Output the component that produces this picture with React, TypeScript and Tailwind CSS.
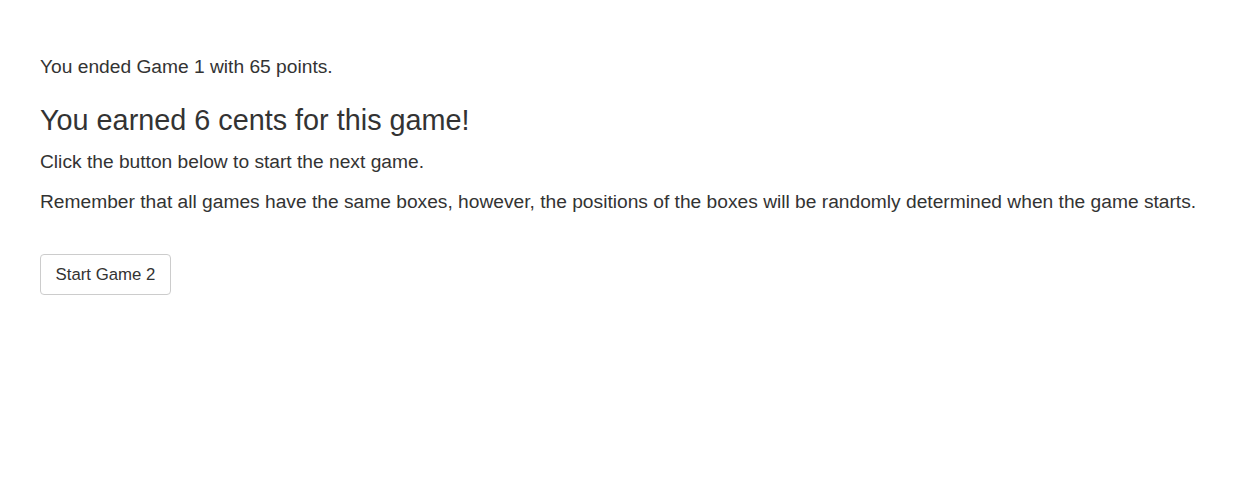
export default function App() {
  return (
    <div className="min-h-screen bg-white px-10 pt-[54px] text-[19.2px] leading-[26px] text-[#333333] font-['Liberation_Sans',Arial,sans-serif]">
      <p className="mb-[25px]">You ended Game 1 with 65 points.</p>
      <h3 className="text-[28.8px] leading-[30px] mb-[14px]">You earned 6 cents for this game!</h3>
      <p className="mb-[14px]">Click the button below to start the next game.</p>
      <p className="mb-[39px]">
        Remember that all games have the same boxes, however, the positions of the boxes will be randomly determined when the game starts.
      </p>
      <button className="h-[41px] w-[131px] text-[16.8px] border border-[#cccccc] rounded-[4px] bg-white text-[#333333]">
        Start Game 2
      </button>
    </div>
  );
}
